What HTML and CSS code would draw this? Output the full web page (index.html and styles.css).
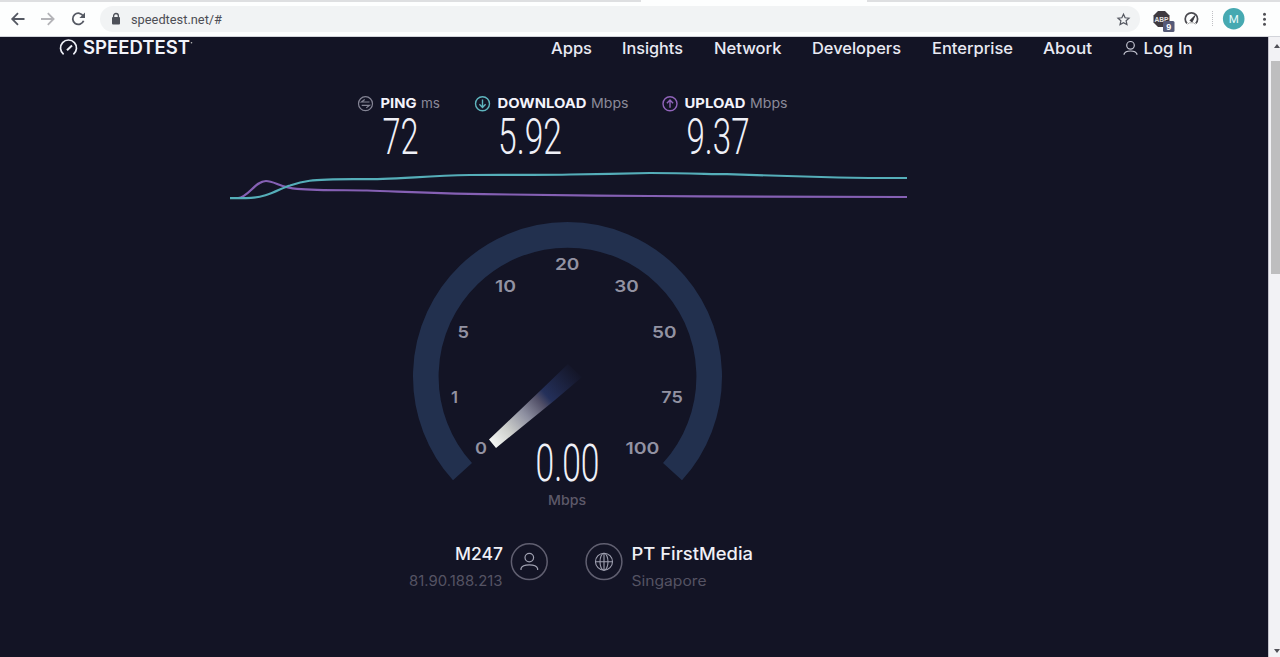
FILE: index.html
```html
<!DOCTYPE html>
<html lang="en">
<head>
<meta charset="utf-8">
<title>Speedtest</title>
<link rel="stylesheet" href="styles.css">
</head>
<body>
<div class="tabs"><span class="active-tab"></span></div>
<header class="toolbar">
  <svg class="browser-nav" viewBox="0 3 100 33">
    <g fill="none" stroke="#555963" stroke-width="1.8">
      <path d="M24.5 19H12.5M18 13.2L12.2 19L18 24.8"/>
      <path d="M41 19H53.5M47.800 13.200L53.600 19L47.800 24.800" stroke="#b4b4b8"/>
      <path d="M83.300 16.200A5.600 5.600 0 1 0 83.600 20.700"/>
    </g>
    <path d="M85 12.400V18H79.400Z" fill="#555963"/>
  </svg>
  <div class="address">
    <svg class="lock" viewBox="0 0 10 14"><path d="M2.600 6V3.900a2.400 2.400 0 0 1 4.800 0V6" fill="none" stroke="#4d5058" stroke-width="1.300"/><rect x="1" y="5" width="8" height="7.500" rx="1" fill="#4d5058"/></svg>
    <svg class="url" viewBox="130 3 96 33"><text x="131" y="23.500" textLength="91" lengthAdjust="spacingAndGlyphs">speedtest.net/#</text></svg>
    <svg class="star" viewBox="0 0 24 24"><path d="M12 3.500l2.600 5.700 6.200.7-4.600 4.200 1.300 6.100-5.500-3.100-5.500 3.100 1.300-6.100-4.600-4.200 6.200-.7z" fill="none" stroke="#555861" stroke-width="2"/></svg>
  </div>
  <svg class="extensions" viewBox="1140 3 140 33">
    <path d="M1158 11h7l4.500 4.500v7l-4.500 4.500h-7l-4.500-4.500v-7z" fill="#3f3a40"/>
    <text class="abp" x="1154.500" y="21.500" textLength="14" lengthAdjust="spacingAndGlyphs">ABP</text>
    <rect x="1163" y="21" width="11.500" height="11" rx="1.500" fill="#555a78"/>
    <text class="badge" x="1168.700" y="30" text-anchor="middle">9</text>
    <path d="M1187 23.400a6.200 6.200 0 1 1 8.800 0" fill="none" stroke="#4a4a50" stroke-width="1.700"/>
    <path d="M1187.500 24.300l2-1.500h4l2 1.500" fill="none" stroke="#aaa"/>
    <path d="M1190 20.500l5-5-2.800 6.300z" fill="#37373d" stroke="#37373d"/>
    <path d="M1212.500 11v16" stroke="#bfc0c4" stroke-dasharray="1 1"/>
    <circle cx="1233.700" cy="18.700" r="10.800" fill="#46a9b1"/>
    <text class="avatar" x="1233.700" y="22.900" text-anchor="middle">M</text>
    <g fill="#515157"><circle cx="1264.500" cy="14.300" r="1.500"/><circle cx="1264.500" cy="19.300" r="1.500"/><circle cx="1264.500" cy="24.300" r="1.500"/></g>
  </svg>
</header>
<div class="viewport">
  <main class="page">
    <div class="site-header">
      <svg class="logo" viewBox="57 37 138 22">
        <g fill="none" stroke="#eef0f8" stroke-width="1.700"><path d="M63.600 54.300A8 8 0 1 1 73.400 54.300"/><path d="M67 50.300L72 45.500" stroke-width="2"/></g>
        <text x="83" y="54.300" textLength="107" lengthAdjust="spacingAndGlyphs">SPEEDTEST</text>
        <circle cx="191.500" cy="42.700" r=".8" fill="#bbb"/>
      </svg>
      <nav class="menu">
        <svg class="w41" viewBox="0 0 41 22"><text y="17" textLength="41" lengthAdjust="spacingAndGlyphs">Apps</text></svg>
        <svg class="w61" viewBox="0 0 61 22"><text y="17" textLength="61" lengthAdjust="spacingAndGlyphs">Insights</text></svg>
        <svg class="w68" viewBox="0 0 68 22"><text y="17" textLength="67.500" lengthAdjust="spacingAndGlyphs">Network</text></svg>
        <svg class="w89" viewBox="0 0 89 22"><text y="17" textLength="89" lengthAdjust="spacingAndGlyphs">Developers</text></svg>
        <svg class="w81" viewBox="0 0 81 22"><text y="17" textLength="81" lengthAdjust="spacingAndGlyphs">Enterprise</text></svg>
        <svg class="w49" viewBox="0 0 49 22"><text y="17" textLength="49" lengthAdjust="spacingAndGlyphs">About</text></svg>
        <svg class="w70" viewBox="1123 37 70 22">
          <g fill="none" stroke="#c5c6d2" stroke-width="1.200"><circle cx="1130.500" cy="45.300" r="3.800"/><path d="M1124.100 54.800v-.8q1-3 6.400-3t6.400 3v.8"/></g>
          <text x="1143.500" y="54" textLength="49" lengthAdjust="spacingAndGlyphs">Log In</text>
        </svg>
      </nav>
    </div>

    <section class="metrics">
      <svg class="ping" viewBox="357 92 86 75">
        <g fill="none" stroke="#858595" stroke-width="1.200"><circle cx="365.500" cy="103.700" r="7"/><path d="M369.500 102H361.500L364.700 99.500M361.700 105.300H369.500L366.300 107.900"/></g>
        <text class="name" x="380.500" y="108.200" textLength="36" lengthAdjust="spacingAndGlyphs">PING</text>
        <text class="unit" x="421" y="108.200" textLength="19" lengthAdjust="spacingAndGlyphs">ms</text>
        <text class="number" x="382.500" y="154.200" textLength="36" lengthAdjust="spacingAndGlyphs">72</text>
      </svg>
      <svg class="download" viewBox="474 92 156 75">
        <g fill="none" stroke="#5fb6bf" stroke-width="1.400"><circle cx="482.500" cy="103.700" r="7"/><path d="M482.500 99.500V107.200M479.400 104.300L482.500 107.400L485.600 104.300"/></g>
        <text class="name" x="497.500" y="108.200" textLength="89" lengthAdjust="spacingAndGlyphs">DOWNLOAD</text>
        <text class="unit" x="591" y="108.200" textLength="37.500" lengthAdjust="spacingAndGlyphs">Mbps</text>
        <text class="number" x="498" y="154.200" textLength="64" lengthAdjust="spacingAndGlyphs">5.92</text>
      </svg>
      <svg class="upload" viewBox="661 92 128 75">
        <g fill="none" stroke="#9164bb" stroke-width="1.400"><circle cx="670" cy="103.700" r="7"/><path d="M670 107.800V100.200M666.900 103.200L670 100.100L673.100 103.200"/></g>
        <text class="name" x="684.500" y="108.200" textLength="61" lengthAdjust="spacingAndGlyphs">UPLOAD</text>
        <text class="unit" x="750" y="108.200" textLength="37.500" lengthAdjust="spacingAndGlyphs">Mbps</text>
        <text class="number" x="686.500" y="154.200" textLength="63" lengthAdjust="spacingAndGlyphs">9.37</text>
      </svg>
    </section>

    <svg class="graph" viewBox="228 167 682 43">
      <g fill="none" stroke-width="2.200">
        <path stroke="#8560b4" d="M230 198H238C248 198 255 181 266 181C274 181 282 188 297 188.800C320 190.600 347 190 367 190.500C410 192 440 194 510 194.500C570 195 600 195.800 650 196C730 196.700 800 197 907 197"/>
        <path stroke="#55aeb9" d="M230 198.200H246C268 198.200 280 188 290 185.500C308 179.500 317 180 333 179.300C350 179 366 179.400 383 178.800C410 178 430 175.800 470 175C510 174.400 535 175.400 570 174.500C600 174 620 173.800 650 173C690 173 710 174.200 727 174.200C770 175.500 810 176.500 838 177.500C860 177.900 885 178 907 178"/>
      </g>
    </svg>

    <svg class="gauge" viewBox="408 216 320 296">
      <defs><linearGradient id="needle" gradientUnits="userSpaceOnUse" x1="491" y1="445" x2="577" y2="369">
        <stop offset="0" stop-color="#f8faf8"/><stop offset=".2" stop-color="#cccecb"/><stop offset=".4" stop-color="#8d8fa0"/><stop offset=".57" stop-color="#504e66"/><stop offset=".65" stop-color="#24305a"/><stop offset="1" stop-color="#131425"/>
      </linearGradient></defs>
      <path d="M462.500 471.700A141.700 141.700 0 1 1 672.500 471.700" fill="none" stroke="#22304e" stroke-width="25.600"/>
      <path d="M489 439.500L541 390L568 364L582 377L555 400L496 448Z" fill="url(#needle)"/>
      <g class="scale" text-anchor="middle">
        <text x="481" y="454" textLength="12" lengthAdjust="spacingAndGlyphs">0</text>
        <text x="454.500" y="403">1</text>
        <text x="463.300" y="338" textLength="11.500" lengthAdjust="spacingAndGlyphs">5</text>
        <text x="505.500" y="291.500" textLength="21" lengthAdjust="spacingAndGlyphs">10</text>
        <text x="567.200" y="270" textLength="24.500" lengthAdjust="spacingAndGlyphs">20</text>
        <text x="626.500" y="291.500" textLength="24.500" lengthAdjust="spacingAndGlyphs">30</text>
        <text x="664.200" y="338" textLength="24.500" lengthAdjust="spacingAndGlyphs">50</text>
        <text x="672" y="403" textLength="21.500" lengthAdjust="spacingAndGlyphs">75</text>
        <text x="642.500" y="454" textLength="34" lengthAdjust="spacingAndGlyphs">100</text>
      </g>
      <text class="number current" x="535.500" y="481" textLength="64" lengthAdjust="spacingAndGlyphs">0.00</text>
      <text class="current-unit" x="548" y="505.300" textLength="38" lengthAdjust="spacingAndGlyphs">Mbps</text>
    </svg>

    <section class="hosts">
      <svg class="client" viewBox="407 540 142 52">
        <text class="host" x="455" y="560" textLength="48" lengthAdjust="spacingAndGlyphs">M247</text>
        <text class="detail" x="409" y="585.500" textLength="93.500" lengthAdjust="spacingAndGlyphs">81.90.188.213</text>
        <g fill="none" stroke="#605f70" stroke-width="1.500"><circle cx="529.300" cy="561.700" r="17.900"/><g stroke="#a0a1b1" stroke-width="1.200"><circle cx="529.300" cy="557.600" r="4.300"/><path d="M521 570v-1.500q1.200-3.700 8.300-3.700t8.300 3.700v1.500"/></g></g>
      </svg>
      <svg class="server" viewBox="584 540 172 52">
        <g fill="none" stroke="#605f70" stroke-width="1.500"><circle cx="604" cy="561.700" r="17.900"/><g stroke="#a0a1b1" stroke-width="1.100"><circle cx="604" cy="561.700" r="8.500"/><ellipse cx="604" cy="561.700" rx="4" ry="8.500"/><path d="M595.500 561.700h17M604 553.200v17"/></g></g>
        <text class="host" x="631.500" y="560" textLength="121.500" lengthAdjust="spacingAndGlyphs">PT FirstMedia</text>
        <text class="detail" x="631.500" y="585.500" textLength="75" lengthAdjust="spacingAndGlyphs">Singapore</text>
      </svg>
    </section>
  </main>
  <aside class="scrollbar">
    <span class="arrow up"></span>
    <span class="thumb"></span>
    <span class="arrow down"></span>
  </aside>
</div>
</body>
</html>
```

FILE: styles.css
```css
* { box-sizing: border-box; }
body { margin: 0; width: 1280px; height: 657px; overflow: hidden; background: #fdfefe; font-family: Inter, "Liberation Sans", sans-serif; }
svg { display: block; flex: none; }
.tabs { height: 3px; background: linear-gradient(#dedfe1 2px, #fdfefe 2px); }
.active-tab { display: block; width: 226px; height: 3px; margin-left: 641px; background: #fdfefe; }
.toolbar { display: flex; height: 34px; border-bottom: 1px solid #d2d4da; }
.browser-nav { width: 100px; height: 33px; }
.address { display: flex; align-items: center; width: 1040px; height: 26px; margin-top: 3px; padding: 0 9px 0 11px; border-radius: 13px; background: #f1f3f4; }
.lock { width: 10px; height: 14px; }
.url { width: 96px; height: 33px; margin-left: 9px; fill: #4d4e55; font: 13px Roboto, sans-serif; }
.star { width: 15px; height: 15px; margin-left: auto; }
.extensions { width: 140px; height: 33px; }
.abp { font: bold 7px "Liberation Sans", sans-serif; fill: #e3e0e3; }
.badge { font: bold 9px "Liberation Sans", sans-serif; fill: #fff; }
.avatar { font: 11.5px Roboto, sans-serif; fill: #e8fafa; }
.viewport { display: flex; height: 620px; }
.page { width: 1268px; background: #131425; }
.site-header { display: flex; justify-content: space-between; height: 55px; padding: 0 75.5px 0 57px; }
.logo { width: 138px; height: 22px; font-size: 18px; font-weight: 600; fill: #f2f3fa; }
.menu { display: flex; gap: 30.500px; fill: #e9eaf3; font-size: 16px; font-weight: 500; }
.menu svg { height: 22px; }
.w41 { width: 41px; }
.w61 { width: 61px; }
.w68 { width: 68px; }
.w89 { width: 89px; }
.w81 { width: 81px; }
.w49 { width: 49px; }
.w70 { width: 70px; }
.metrics { display: flex; height: 75px; padding-left: 357px; }
.metrics svg { height: 75px; }
.ping { width: 86px; margin-right: 31px; }
.download { width: 156px; margin-right: 31px; }
.upload { width: 128px; }
.name { font-size: 13.500px; font-weight: 700; fill: #f3f3fb; }
.unit { font-size: 13.500px; fill: #8b8a99; }
.number { font-family: Roboto, sans-serif; font-size: 50px; font-weight: 300; fill: #eff0f7; }
.graph { width: 682px; height: 43px; margin-left: 228px; }
.gauge { width: 320px; height: 296px; margin: 6px 0 0 408px; }
.scale { font-size: 16.500px; font-weight: 600; fill: #9292a2; }
.current { font-size: 52px; }
.current-unit { font-size: 13.500px; font-weight: 500; fill: #5d5969; }
.hosts { display: flex; gap: 35px; margin: 28px 0 0 407px; }
.client { width: 142px; height: 52px; }
.server { width: 172px; height: 52px; }
.host { font-size: 17px; font-weight: 500; fill: #f0f1f7; }
.detail { font-size: 14px; fill: #555363; }
.scrollbar { display: flex; flex-direction: column; width: 12px; padding: 7px 0 4px 2px; border-left: 1px solid #c4c3cd; background: #f2f2f5; }
.arrow { width: 0; height: 0; margin-left: 3px; border: 3px solid transparent; }
.up { border-top: 0; border-bottom: 4px solid #505057; }
.down { margin-top: auto; border-bottom: 0; border-top: 4px solid #505057; }
.thumb { width: 10px; height: 213px; margin-top: 13px; background: #bebebf; }
```
